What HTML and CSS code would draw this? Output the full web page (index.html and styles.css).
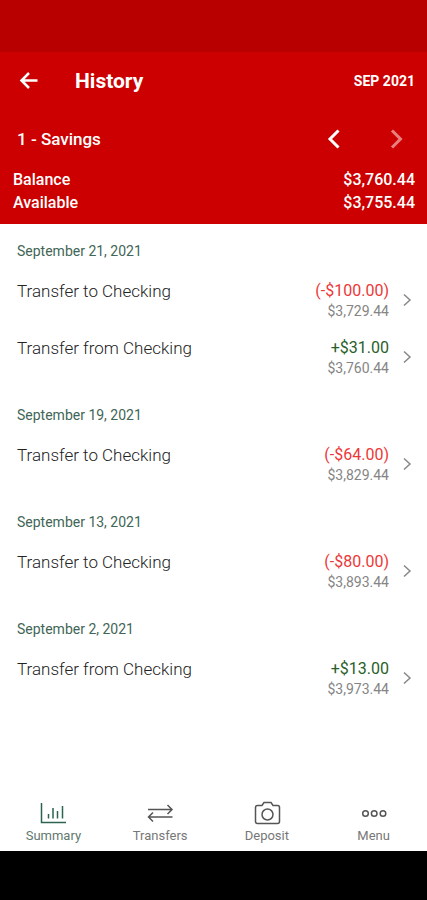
FILE: index.html
```html
<!DOCTYPE html>
<html lang="en">
<head>
<meta charset="utf-8">
<meta name="viewport" content="width=device-width, initial-scale=1">
<title>History</title>
<link rel="stylesheet" href="styles.css">
</head>
<body>
<div class="status-bar"></div>
<header class="header">
  <div class="toolbar">
    <button class="icon-button" type="button" aria-label="Back">
      <svg width="24" height="24" viewBox="0 0 24 24"><path d="M21.500 11.500H6M13 4L5.500 11.500L13 19"/></svg>
    </button>
    <h1 class="title">History</h1>
    <button class="month" type="button">SEP 2021</button>
  </div>
  <div class="account">
    <h2 class="account-name">1 - Savings</h2>
    <button class="icon-button" type="button" aria-label="Previous account">
      <svg width="24" height="24" viewBox="0 0 24 24"><path class="thick" d="M15.500 3.500L7 12L15.500 20.500"/></svg>
    </button>
    <button class="icon-button next" type="button" aria-label="Next account" disabled>
      <svg width="24" height="24" viewBox="0 0 24 24"><path class="thick" d="M7 3.500L15.500 12L7 20.500"/></svg>
    </button>
  </div>
  <dl class="balances">
    <div class="balance"><dt>Balance</dt><dd>$3,760.44</dd></div>
    <div class="balance"><dt>Available</dt><dd>$3,755.44</dd></div>
  </dl>
</header>
<main class="history">
  <h3 class="date">September 21, 2021</h3>
  <a class="entry" href="#"><span class="name">Transfer to Checking</span><span class="sums"><span class="amount debit">(-$100.00)</span><span class="running">$3,729.44</span></span><svg class="chevron" width="10" height="14" viewBox="0 0 10 14"><path d="M2 1.500L8 7L2 12.500"/></svg></a>
  <a class="entry" href="#"><span class="name">Transfer from Checking</span><span class="sums"><span class="amount credit">+$31.00</span><span class="running">$3,760.44</span></span><svg class="chevron" width="10" height="14" viewBox="0 0 10 14"><path d="M2 1.500L8 7L2 12.500"/></svg></a>
  <h3 class="date">September 19, 2021</h3>
  <a class="entry" href="#"><span class="name">Transfer to Checking</span><span class="sums"><span class="amount debit">(-$64.00)</span><span class="running">$3,829.44</span></span><svg class="chevron" width="10" height="14" viewBox="0 0 10 14"><path d="M2 1.500L8 7L2 12.500"/></svg></a>
  <h3 class="date">September 13, 2021</h3>
  <a class="entry" href="#"><span class="name">Transfer to Checking</span><span class="sums"><span class="amount debit">(-$80.00)</span><span class="running">$3,893.44</span></span><svg class="chevron" width="10" height="14" viewBox="0 0 10 14"><path d="M2 1.500L8 7L2 12.500"/></svg></a>
  <h3 class="date">September 2, 2021</h3>
  <a class="entry" href="#"><span class="name">Transfer from Checking</span><span class="sums"><span class="amount credit">+$13.00</span><span class="running">$3,973.44</span></span><svg class="chevron" width="10" height="14" viewBox="0 0 10 14"><path d="M2 1.500L8 7L2 12.500"/></svg></a>
</main>
<nav class="tabs">
  <a class="tab active" href="#">
    <svg width="28" height="28" viewBox="0 0 28 28"><path d="M2.500 4V23.500H27M9.500 15V19.500M14 9V19.500M18.500 12V19.500M23.500 7V19.500"/></svg>
    <span>Summary</span>
  </a>
  <a class="tab" href="#">
    <svg width="28" height="28" viewBox="0 0 28 28"><path d="M2 10.500H26M21.500 6L26 10.500L21.500 15M26.500 18H2.500M7 13.500L2.500 18L7 22.500"/></svg>
    <span>Transfers</span>
  </a>
  <a class="tab" href="#">
    <svg width="28" height="28" viewBox="0 0 28 28"><path d="M4.500 6.500H9L11 3.500H18L20 6.500H24.500Q26.500 6.500 26.500 8.500V22.500Q26.500 24.500 24.500 24.500H4.500Q2.500 24.500 2.500 22.500V8.500Q2.500 6.500 4.500 6.500Z"/><circle cx="14.500" cy="15.500" r="5.500"/></svg>
    <span>Deposit</span>
  </a>
  <a class="tab" href="#">
    <svg width="28" height="28" viewBox="0 0 28 28"><circle cx="5.500" cy="14.500" r="2.800"/><circle cx="14.200" cy="14.500" r="2.800"/><circle cx="23" cy="14.500" r="2.800"/></svg>
    <span>Menu</span>
  </a>
</nav>
<div class="system-bar"></div>
</body>
</html>
```
FILE: styles.css
```css
* {
  box-sizing: border-box;
}

body {
  display: flex;
  flex-direction: column;
  min-height: 100vh;
  margin: 0;
  background: #fff;
  color: #333;
  font-family: Roboto, "Liberation Sans", sans-serif;
}

h1, h2, h3, dl, dd {
  margin: 0;
}

button {
  padding: 0;
  border: 0;
  background: none;
  color: inherit;
  font: inherit;
}

a {
  color: inherit;
  text-decoration: none;
}

svg {
  display: block;
  fill: none;
  stroke: currentColor;
}

.status-bar {
  height: 52px;
  background: #b80000;
}

.header {
  padding-bottom: 10px;
  background: #cc0000;
  color: #fff;
}

.toolbar {
  display: flex;
  align-items: center;
  height: 58px;
  padding: 0 12px 0 16px;
}

.icon-button svg {
  stroke-width: 2.5;
}

.icon-button .thick {
  stroke-width: 3;
}

.title {
  flex: 1;
  margin-left: 35px;
  font-size: 21px;
  font-weight: 700;
}

.month {
  font-size: 14px;
  font-weight: 700;
}

.account {
  display: flex;
  align-items: center;
  gap: 38px;
  height: 58px;
  padding: 0 18px 0 17px;
}

.account-name {
  flex: 1;
  font-size: 17px;
  font-weight: 500;
}

.next {
  color: #e88080;
}

.balances {
  padding: 0 12px 0 13px;
  font-size: 16px;
  font-weight: 500;
  line-height: 23px;
}

.balance {
  display: flex;
  justify-content: space-between;
}

.history {
  flex: 1;
}

.date {
  height: 50px;
  padding: 17px 17px 0;
  color: #3f6656;
  font-size: 14px;
  font-weight: 400;
  line-height: 20px;
}

.entry {
  display: flex;
  align-items: center;
  height: 57px;
  padding: 0 15px 6px 17px;
}

.name {
  flex: 1;
  align-self: flex-start;
  padding-top: 7px;
  color: #222;
  font-size: 17px;
  font-weight: 300;
  line-height: 20px;
}

.sums {
  display: flex;
  flex-direction: column;
  margin-right: 13px;
  padding-top: 3px;
  text-align: right;
}

.amount {
  font-size: 16px;
  line-height: 20px;
}

.debit {
  color: #ed3838;
}

.credit {
  color: #286028;
}

.running {
  color: #858585;
  font-size: 14px;
  line-height: 20px;
}

.chevron {
  color: #888;
  stroke-width: 1.5;
}

.tabs {
  display: grid;
  grid-template-columns: repeat(4, 1fr);
  padding-bottom: 6px;
}

.tab {
  display: flex;
  flex-direction: column;
  align-items: center;
  color: #777;
  font-size: 13px;
  line-height: 18px;
}

.tab svg {
  color: #555;
  stroke-width: 1.5;
}

.active svg {
  color: #2d6350;
}

.active {
  color: #62786f;
}

.system-bar {
  height: 49px;
  background: #000;
}
```
